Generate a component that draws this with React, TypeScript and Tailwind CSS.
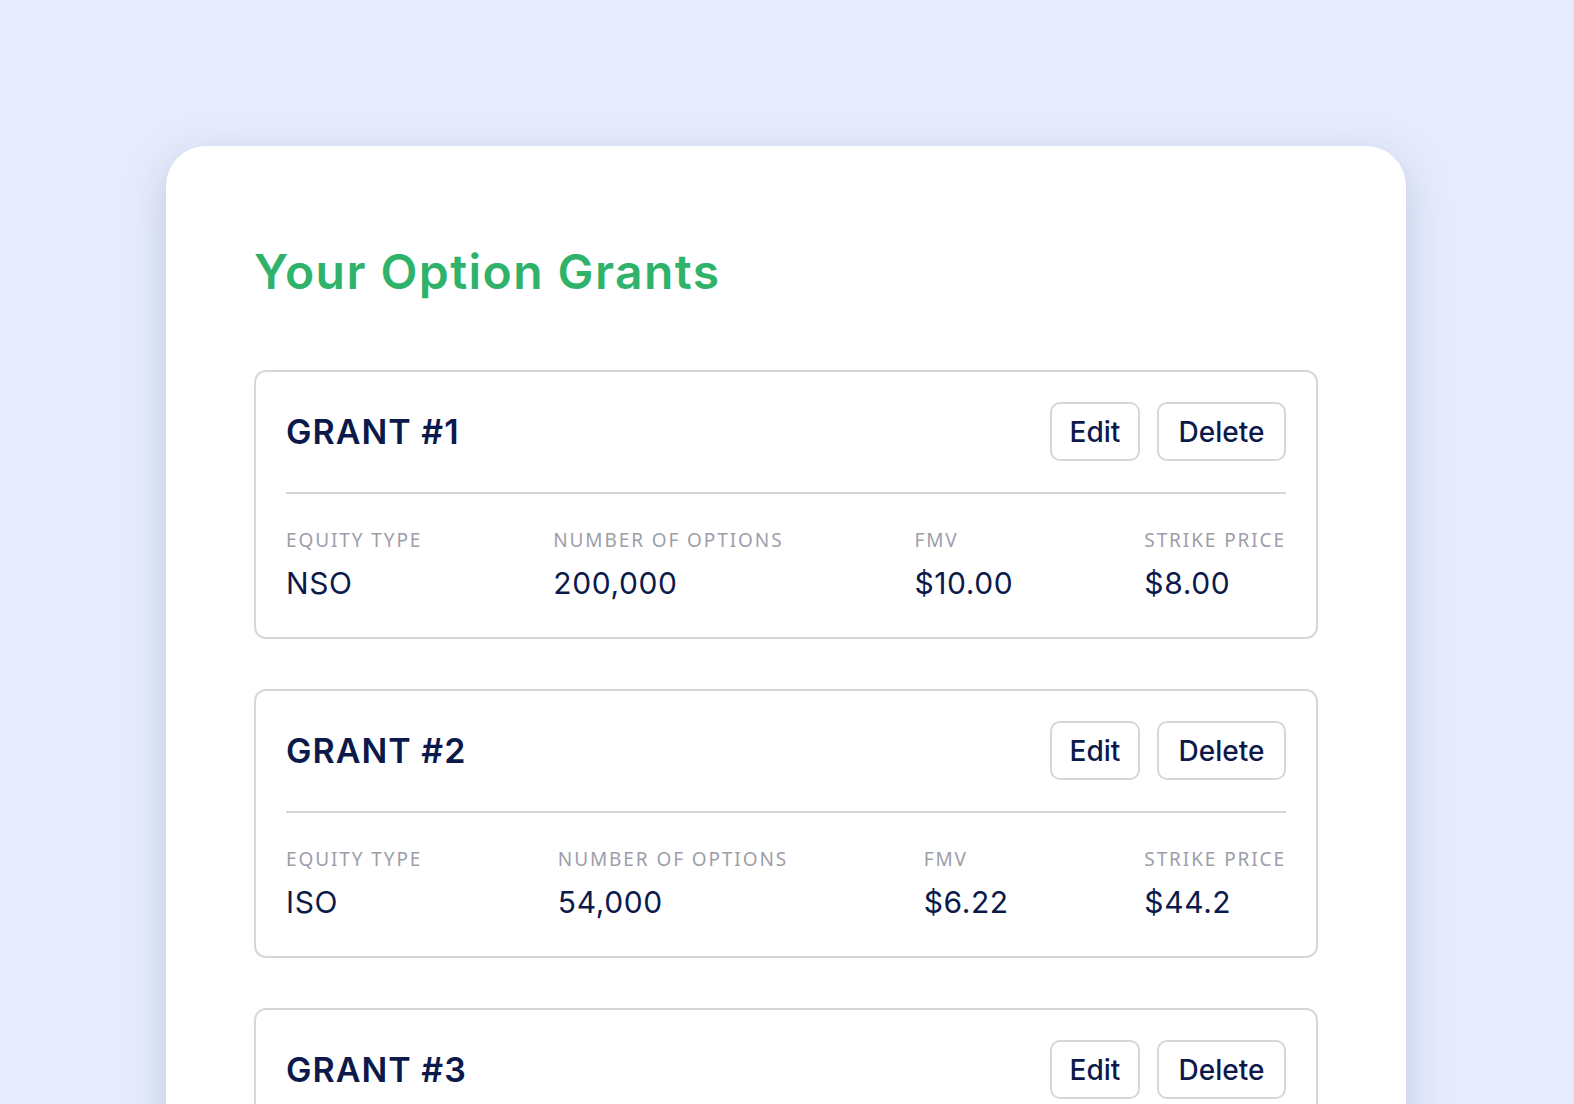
import React from 'react';

type Grant = {
  id: number;
  equityType: string;
  options: string;
  fmv: string;
  strike: string;
};

const GRANTS: Grant[] = [
  { id: 1, equityType: 'NSO', options: '200,000', fmv: '$10.00', strike: '$8.00' },
  { id: 2, equityType: 'ISO', options: '54,000', fmv: '$6.22', strike: '$44.2' },
  { id: 3, equityType: 'ISO', options: '12,500', fmv: '$3.10', strike: '$1.50' },
];

const heading = "font-['Inter','Liberation_Sans',sans-serif]";
const label = "font-['Noto_Sans','Open_Sans',sans-serif]";

const Field = ({ title, value }: { title: string; value: string }) => (
  <div className="flex flex-col">
    <span className={`${label} text-[19px] leading-6 tracking-[0.1em] text-[#9c9eaa] uppercase`}>{title}</span>
    <span className={`${heading} mt-[11px] text-[30px] leading-10 tracking-[0.02em] text-[#0c1a4b]`}>{value}</span>
  </div>
);

const GrantCard = ({ grant }: { grant: Grant }) => (
  <div className="rounded-[12px] border-2 border-[#d6d7dd] px-[30px] pt-[30px] pb-[34px]">
    <div className="flex h-[59px] items-center justify-between">
      <h3 className={`${heading} text-[34px] font-semibold tracking-[0.03em] text-[#0c1a4b]`}>GRANT #{grant.id}</h3>
      <div className="flex gap-[17px]">
        <button className={`${heading} h-[59px] w-[90px] rounded-[10px] border-2 border-[#d6d7dd] text-[28px] font-medium text-[#0c1a4b]`}>
          Edit
        </button>
        <button className={`${heading} h-[59px] w-[129px] rounded-[10px] border-2 border-[#d6d7dd] text-[28px] font-medium text-[#0c1a4b]`}>
          Delete
        </button>
      </div>
    </div>
    <div className="mt-[31px] border-t-2 border-[#d6d7dd]" />
    <div className="flex justify-between pt-[34px]">
      <Field title="Equity Type" value={grant.equityType} />
      <Field title="Number of Options" value={grant.options} />
      <Field title="FMV" value={grant.fmv} />
      <Field title="Strike Price" value={grant.strike} />
    </div>
  </div>
);

export default function App() {
  return (
    <div className="h-[1104px] overflow-hidden bg-[#e6ecfc] pt-[146px] pl-[166px]">
      <div className="w-[1240px] rounded-[40px] bg-white px-[88px] pt-[96px] pb-[60px] shadow-[0_12px_40px_rgba(120,135,180,0.35)]">
        <h1 className={`${heading} text-[48px] leading-[60px] font-semibold tracking-[0.03em] text-[#2fb36a]`}>Your Option Grants</h1>
        <div className="mt-[68px] flex flex-col gap-[50px]">
          {GRANTS.map((g) => (
            <GrantCard key={g.id} grant={g} />
          ))}
        </div>
      </div>
    </div>
  );
}
